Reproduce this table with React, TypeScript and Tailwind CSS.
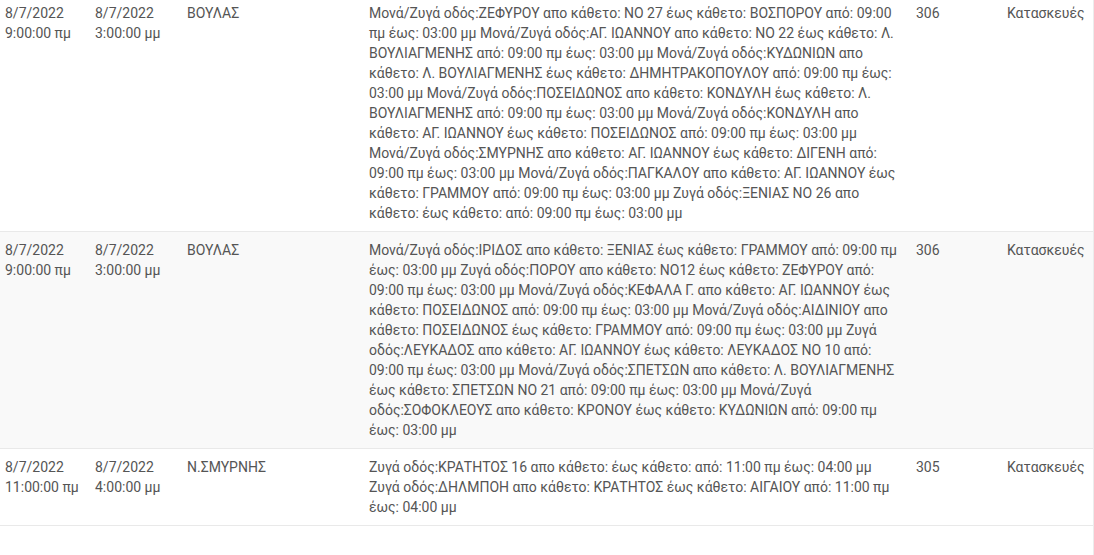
import React from "react";

interface Outage {
  from: [string, string];
  to: [string, string];
  area: string;
  lines: string[];
  code: string;
  reason: string;
}

const rows: Outage[] = [
  {
    from: ["8/7/2022", "9:00:00 πμ"],
    to: ["8/7/2022", "3:00:00 μμ"],
    area: "ΒΟΥΛΑΣ",
    lines: [
      "Μονά/Ζυγά οδός:ΖΕΦΥΡΟΥ απο κάθετο: ΝΟ 27 έως κάθετο: ΒΟΣΠΟΡΟΥ από: 09:00",
      "πμ έως: 03:00 μμ Μονά/Ζυγά οδός:ΑΓ. ΙΩΑΝΝΟΥ απο κάθετο: ΝΟ 22 έως κάθετο: Λ.",
      "ΒΟΥΛΙΑΓΜΕΝΗΣ από: 09:00 πμ έως: 03:00 μμ Μονά/Ζυγά οδός:ΚΥΔΩΝΙΩΝ απο",
      "κάθετο: Λ. ΒΟΥΛΙΑΓΜΕΝΗΣ έως κάθετο: ΔΗΜΗΤΡΑΚΟΠΟΥΛΟΥ από: 09:00 πμ έως:",
      "03:00 μμ Μονά/Ζυγά οδός:ΠΟΣΕΙΔΩΝΟΣ απο κάθετο: ΚΟΝΔΥΛΗ έως κάθετο: Λ.",
      "ΒΟΥΛΙΑΓΜΕΝΗΣ από: 09:00 πμ έως: 03:00 μμ Μονά/Ζυγά οδός:ΚΟΝΔΥΛΗ απο",
      "κάθετο: ΑΓ. ΙΩΑΝΝΟΥ έως κάθετο: ΠΟΣΕΙΔΩΝΟΣ από: 09:00 πμ έως: 03:00 μμ",
      "Μονά/Ζυγά οδός:ΣΜΥΡΝΗΣ απο κάθετο: ΑΓ. ΙΩΑΝΝΟΥ έως κάθετο: ΔΙΓΕΝΗ από:",
      "09:00 πμ έως: 03:00 μμ Μονά/Ζυγά οδός:ΠΑΓΚΑΛΟΥ απο κάθετο: ΑΓ. ΙΩΑΝΝΟΥ έως",
      "κάθετο: ΓΡΑΜΜΟΥ από: 09:00 πμ έως: 03:00 μμ Ζυγά οδός:ΞΕΝΙΑΣ ΝΟ 26 απο",
      "κάθετο: έως κάθετο: από: 09:00 πμ έως: 03:00 μμ",
    ],
    code: "306",
    reason: "Κατασκευές",
  },
  {
    from: ["8/7/2022", "9:00:00 πμ"],
    to: ["8/7/2022", "3:00:00 μμ"],
    area: "ΒΟΥΛΑΣ",
    lines: [
      "Μονά/Ζυγά οδός:ΙΡΙΔΟΣ απο κάθετο: ΞΕΝΙΑΣ έως κάθετο: ΓΡΑΜΜΟΥ από: 09:00 πμ",
      "έως: 03:00 μμ Ζυγά οδός:ΠΟΡΟΥ απο κάθετο: ΝΟ12 έως κάθετο: ΖΕΦΥΡΟΥ από:",
      "09:00 πμ έως: 03:00 μμ Μονά/Ζυγά οδός:ΚΕΦΑΛΑ Γ. απο κάθετο: ΑΓ. ΙΩΑΝΝΟΥ έως",
      "κάθετο: ΠΟΣΕΙΔΩΝΟΣ από: 09:00 πμ έως: 03:00 μμ Μονά/Ζυγά οδός:ΑΙΔΙΝΙΟΥ απο",
      "κάθετο: ΠΟΣΕΙΔΩΝΟΣ έως κάθετο: ΓΡΑΜΜΟΥ από: 09:00 πμ έως: 03:00 μμ Ζυγά",
      "οδός:ΛΕΥΚΑΔΟΣ απο κάθετο: ΑΓ. ΙΩΑΝΝΟΥ έως κάθετο: ΛΕΥΚΑΔΟΣ ΝΟ 10 από:",
      "09:00 πμ έως: 03:00 μμ Μονά/Ζυγά οδός:ΣΠΕΤΣΩΝ απο κάθετο: Λ. ΒΟΥΛΙΑΓΜΕΝΗΣ",
      "έως κάθετο: ΣΠΕΤΣΩΝ ΝΟ 21 από: 09:00 πμ έως: 03:00 μμ Μονά/Ζυγά",
      "οδός:ΣΟΦΟΚΛΕΟΥΣ απο κάθετο: ΚΡΟΝΟΥ έως κάθετο: ΚΥΔΩΝΙΩΝ από: 09:00 πμ",
      "έως: 03:00 μμ",
    ],
    code: "306",
    reason: "Κατασκευές",
  },
  {
    from: ["8/7/2022", "11:00:00 πμ"],
    to: ["8/7/2022", "4:00:00 μμ"],
    area: "Ν.ΣΜΥΡΝΗΣ",
    lines: [
      "Ζυγά οδός:ΚΡΑΤΗΤΟΣ 16 απο κάθετο: έως κάθετο: από: 11:00 πμ έως: 04:00 μμ",
      "Ζυγά οδός:ΔΗΛΜΠΟΗ απο κάθετο: ΚΡΑΤΗΤΟΣ έως κάθετο: ΑΙΓΑΙΟΥ από: 11:00 πμ",
      "έως: 04:00 μμ",
    ],
    code: "305",
    reason: "Κατασκευές",
  },
];

const cell = "pl-[5px] py-2";

export default function App() {
  return (
    <div className="h-[555px] w-full overflow-hidden bg-white border-r border-[#ececec] font-['Roboto',sans-serif] text-[14px] leading-5 text-[#555]">
      <div className="-mt-[5px]">
        {rows.map((r, i) => (
          <div
            key={i}
            className={`grid grid-cols-[90px_92px_182px_547px_91px_1fr] border-b border-[#e9e9e9] ${
              i % 2 === 1 ? "bg-[#f9f9f9]" : "bg-white"
            }`}
          >
            <div className={cell}>
              {r.from[0]}
              <br />
              {r.from[1]}
            </div>
            <div className={cell}>
              {r.to[0]}
              <br />
              {r.to[1]}
            </div>
            <div className={cell}>{r.area}</div>
            <div className={`${cell} whitespace-nowrap`}>
              {r.lines.map((l, j) => (
                <div key={j}>{l}</div>
              ))}
            </div>
            <div className={cell}>{r.code}</div>
            <div className={cell}>{r.reason}</div>
          </div>
        ))}
      </div>
    </div>
  );
}
